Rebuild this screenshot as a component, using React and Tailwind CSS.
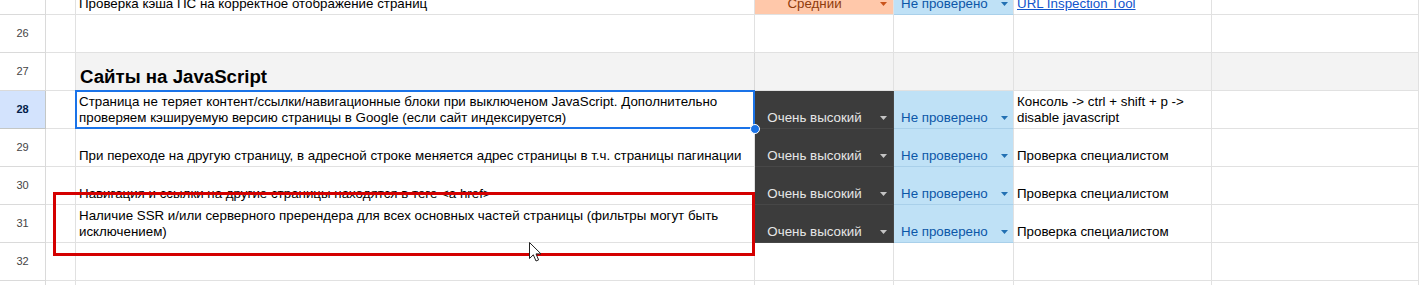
import React from 'react'

const cols = 'grid grid-cols-[46px_30px_679px_139px_120px_198px_1fr]'
const line = 'border-r border-b border-[#e1e1e1]'

function Arrow({ color }) {
  return (
    <svg width="7" height="4" viewBox="0 0 7 4" className="shrink-0 mb-[6px]">
      <path d="M0 0 L7 0 L3.5 4 Z" fill={color} />
    </svg>
  )
}

function Head({ n, active }) {
  return (
    <div
      className={`flex items-center justify-center border-r border-b text-[11px] ${
        active ? 'bg-[#d3e3fd] border-[#c4c7c5] font-bold text-[#041e49]' : 'bg-white border-[#dadada] text-[#444]'
      }`}
    >
      {n}
    </div>
  )
}

function Text({ children, className = '' }) {
  return <div className={`${line} flex items-end px-[3px] pb-[2px] leading-[16px] ${className}`}>{children}</div>
}

function Priority({ label, tone }) {
  const styles = {
    dark: 'bg-[#3c3c3c] border-[#474747] text-[#e6e6e6]',
    mid: 'bg-[#ffc8aa] border-[#e1e1e1] text-[#8f3b0c]',
  }
  return (
    <div className={`border-r border-b flex items-end pb-[2px] leading-[16px] ${styles[tone]}`}>
      <span className="flex-1 text-center pr-[6px] whitespace-nowrap">{label}</span>
      <span className="mr-[6px]">
        <Arrow color={tone === 'dark' ? '#c4c4c4' : '#c9541c'} />
      </span>
    </div>
  )
}

function Status() {
  return (
    <div className="border-r border-b border-b-[#a9d0ea] border-r-[#e1e1e1] bg-[#bfe1f6] flex items-end pb-[2px] leading-[16px] text-[#0b57a8]">
      <span className="flex-1 pl-[7px] whitespace-nowrap">Не проверено</span>
      <span className="mr-[5px]">
        <Arrow color="#2370b3" />
      </span>
    </div>
  )
}

function Empty({ className = '' }) {
  return <div className={`${line} ${className}`} />
}

function BlankRow({ n }) {
  return (
    <div className={`${cols} h-[38px]`}>
      <Head n={n} />
      <Empty />
      <Empty />
      <Empty />
      <Empty />
      <Empty />
      <Empty />
    </div>
  )
}

export default function App() {
  const checks = [
    {
      n: 29,
      text: 'При переходе на другую страницу, в адресной строке меняется адрес страницы в т.ч. страницы пагинации',
    },
    { n: 30, text: 'Навигация и ссылки на другие страницы находятся в теге <a href>' },
    {
      n: 31,
      text: (
        <>
          Наличие SSR и/или серверного пререндера для всех основных частей страницы (фильтры могут быть
          <br />
          исключением)
        </>
      ),
    },
  ]

  return (
    <div className="relative h-[285px] w-[1419px] overflow-hidden bg-white text-[13.33px] text-black font-['Liberation_Sans',Arial,sans-serif]">
      {/* row 25, cut off at the top */}
      <div className={`${cols} grid-rows-[15px] h-[15px] overflow-hidden`}>
        <Head n="" />
        <Empty />
        <Text className="whitespace-nowrap">Проверка кэша ПС на корректное отображение страниц</Text>
        <Priority label="Средний" tone="mid" />
        <Status />
        <Text>
          <span className="text-[#1155cc] underline whitespace-nowrap">URL Inspection Tool</span>
        </Text>
        <Empty />
      </div>

      <BlankRow n={26} />

      <div className={`${cols} h-[38px]`}>
        <Head n={27} />
        <Empty />
        <div className="border-r border-b border-[#d9d9d9] bg-[#f3f3f3] flex items-end px-[4px] pb-[2px] leading-[22px] text-[18.67px] font-bold">
          Сайты на JavaScript
        </div>
        <Empty className="bg-[#f3f3f3] border-[#d9d9d9]" />
        <Empty className="bg-[#f3f3f3] border-[#d9d9d9]" />
        <Empty className="bg-[#f3f3f3] border-[#d9d9d9]" />
        <Empty className="bg-[#f3f3f3] border-[#d9d9d9]" />
      </div>

      <div className={`${cols} h-[38px]`}>
        <Head n={28} active />
        <Empty />
        <div className={`${line} relative flex items-end px-[3px] pb-[2px] leading-[16px]`}>
          <div className="whitespace-nowrap">
            Страница не теряет контент/ссылки/навигационные блоки при выключеном JavaScript. Дополнительно
            <br />
            проверяем кэшируемую версию страницы в Google (если сайт индексируется)
          </div>
          <div className="absolute -top-px -left-px -right-px -bottom-px border-2 border-[#1a73e8]" />
          <div className="absolute -right-[6px] -bottom-[6px] z-10 h-[10px] w-[10px] rounded-full border border-white bg-[#1a73e8]" />
        </div>
        <Priority label="Очень высокий" tone="dark" />
        <Status />
        <Text>
          <div>
            Консоль -&gt; ctrl + shift + p -&gt;
            <br />
            disable javascript
          </div>
        </Text>
        <Empty />
      </div>

      {checks.map((row) => (
        <div key={row.n} className={`${cols} h-[38px]`}>
          <Head n={row.n} />
          <Empty />
          <Text className="whitespace-nowrap">
            <div>{row.text}</div>
          </Text>
          <Priority label="Очень высокий" tone="dark" />
          <Status />
          <Text className="whitespace-nowrap">Проверка специалистом</Text>
          <Empty />
        </div>
      ))}

      <BlankRow n={32} />
      <BlankRow n="" />

      {/* annotation frame */}
      <div className="absolute left-[53px] top-[192px] h-[64px] w-[702px] border-[3px] border-[#d40000]" />

      {/* mouse pointer */}
      <svg width="14" height="21" viewBox="0 0 14 21" className="absolute left-[529px] top-[242px]">
        <path
          d="M0.5 0.5 L0.5 16.5 L4.3 12.8 L7 19 L9.6 17.9 L7 11.9 L12 11.9 Z"
          fill="#fff"
          stroke="#222"
          strokeWidth="1"
          strokeLinejoin="round"
        />
      </svg>
    </div>
  )
}
